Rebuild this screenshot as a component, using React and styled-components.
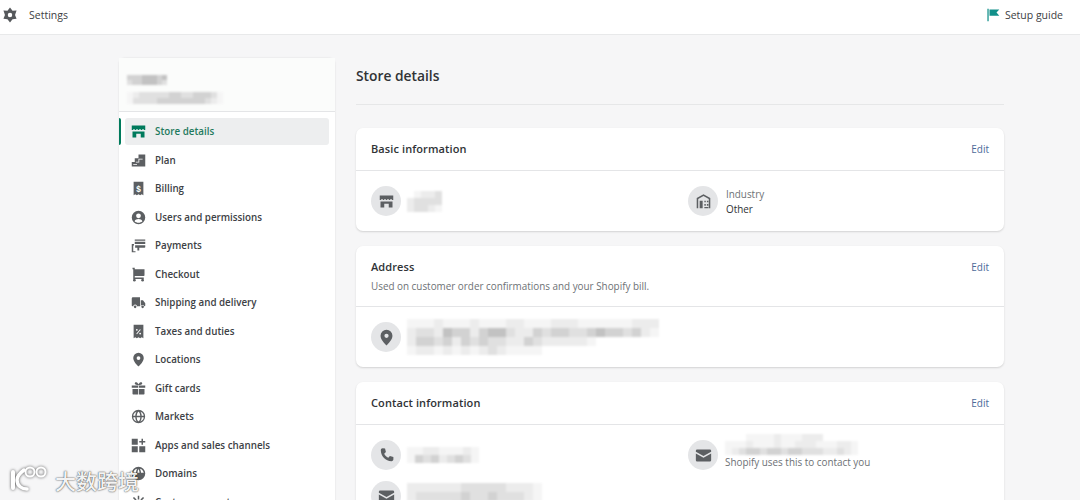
import React from "react";
import styled, { createGlobalStyle } from "styled-components";

const GlobalStyle = createGlobalStyle`
  html, body {
    margin: 0;
    width: 1080px;
    height: 500px;
    overflow: hidden;
    background: #f6f6f7;
    color: #202223;
    font-family: "Open Sans", "Noto Sans", sans-serif;
  }
  * { box-sizing: border-box; }
`;

const Page = styled.div`
  position: relative;
  width: 1080px;
  height: 500px;
  overflow: hidden;
`;

const TopBar = styled.header`
  height: 35px;
  display: flex;
  align-items: center;
  justify-content: space-between;
  padding: 0 17px 5px 2px;
  background: #fff;
  border-bottom: 1px solid #e8e9ea;
`;

const TopGroup = styled.div`
  display: flex;
  align-items: center;
  gap: ${({ $gap }) => $gap}px;
  font-size: 10.5px;
  color: #3c4043;
`;

const Layout = styled.div`
  display: flex;
  align-items: flex-start;
  gap: 21px;
  padding: 23px 76px 0 119px;
`;

const Sidebar = styled.aside`
  flex: 0 0 216px;
  background: #fff;
  border-radius: 6px 6px 0 0;
  box-shadow: 0 0 2px rgba(23, 24, 24, 0.12);
`;

const SideHead = styled.div`
  height: 54px;
  padding: 17px 0 0 8px;
  display: flex;
  flex-direction: column;
  gap: 7px;
  background: #fbfcfb;
  border-bottom: 1px solid #e4e5e7;
`;

const Nav = styled.nav`
  display: flex;
  flex-direction: column;
  gap: 1.5px;
  padding-top: 6px;
`;

const NavRow = styled.div`
  position: relative;
  flex: 0 0 27px;
  margin: 0 6px;
  padding-left: 6px;
  display: flex;
  align-items: center;
  gap: 9px;
  font-size: 9.8px;
  font-weight: 600;
  color: ${({ $active }) => ($active ? "#1f7a5e" : "#3d4145")};
  background: ${({ $active }) => ($active ? "#edeeef" : "transparent")};
  border-radius: 3px;

  &::before {
    content: "";
    display: ${({ $active }) => ($active ? "block" : "none")};
    position: absolute;
    left: -6px;
    top: 0;
    bottom: 0;
    width: 2px;
    background: #007a5c;
    border-radius: 0 2px 2px 0;
  }
`;

const Main = styled.main`
  flex: 0 0 648px;
`;

const Title = styled.h1`
  margin: 0 0 23px;
  height: 47px;
  padding-top: 8px;
  font-size: 13.8px;
  line-height: 20px;
  font-weight: 600;
  color: #303336;
  border-bottom: 1px solid #e6e7e8;
`;

const Card = styled.section`
  background: #fff;
  border-radius: 7px;
  margin-bottom: 15px;
  box-shadow: 0 1px 2px rgba(23, 24, 24, 0.16);
`;

const CardHead = styled.div`
  height: ${({ $tall }) => ($tall ? 61 : 43)}px;
  padding: ${({ $tall }) => ($tall ? "13px 15px 0" : "0 15px 1px")};
  display: flex;
  justify-content: space-between;
  align-items: ${({ $tall }) => ($tall ? "flex-start" : "center")};
  border-bottom: 1px solid #e4e5e7;
`;

const HeadText = styled.div`
  display: flex;
  flex-direction: column;
  gap: 5px;
`;

const CardTitle = styled.h2`
  margin: 0;
  font-size: 11px;
  line-height: 15px;
  font-weight: 600;
  letter-spacing: 0.1px;
  color: #303336;
`;

const SubText = styled.div`
  font-size: 9.9px;
  line-height: 14px;
  color: ${({ $dark }) => ($dark ? "#303336" : "#6d7175")};
`;

const EditLink = styled.a`
  font-size: 10px;
  line-height: 15px;
  margin-top: 1px;
  color: #4c6b9a;
`;

const CardBody = styled.div`
  display: grid;
  grid-template-columns: 317px 1fr;
  row-gap: 11px;
  padding: ${({ $pad }) => $pad}px 15px;
`;

const InfoItem = styled.div`
  display: flex;
  align-items: center;
  gap: ${({ $gap }) => $gap ?? 6}px;
  min-height: 30px;
`;

const IconDisc = styled.span`
  flex: 0 0 30px;
  width: 30px;
  height: 30px;
  border-radius: 50%;
  background: #e4e5e7;
  display: flex;
  align-items: center;
  justify-content: center;
`;

const InfoText = styled.div`
  display: flex;
  flex-direction: column;
  gap: ${({ $gap }) => $gap ?? 1}px;
  margin-top: ${({ $pull }) => ($pull ? -7 : 0)}px;
`;

const Watermark = styled.div`
  position: absolute;
  left: 10px;
  bottom: 5px;
  display: flex;
  align-items: center;
  gap: 7px;
  color: rgba(255, 255, 255, 0.96);
  font-family: "Noto Sans CJK SC", sans-serif;
  font-size: 21px;
  font-weight: 500;
  line-height: 30px;
  text-shadow: 0 0 2px rgba(0, 0, 0, 0.6), 0 0 1px rgba(0, 0, 0, 0.55);
`;

const shades = {
  0: "#ffffff",
  1: "#f5f5f5",
  2: "#ececec",
  3: "#e0e0e0",
  4: "#d2d2d2",
  5: "#c2c2c2",
};

// censored blocks in the screenshot, one char per cell
const Mosaic = ({ rows, cell = 9 }) => (
  <svg
    width={rows[0].length * cell}
    height={rows.length * cell}
    style={{ display: "block", filter: "blur(1px)" }}
  >
    {rows.map((row, y) =>
      row
        .split("")
        .map((c, x) => (
          <rect key={`${x}-${y}`} x={x * cell} y={y * cell} width={cell} height={cell} fill={shades[c]} />
        ))
    )}
  </svg>
);

const Icon = ({ size = 15, color = "#5c5f62", children }) => (
  <svg width={size} height={size} viewBox="0 0 20 20" fill={color} style={{ flex: `0 0 ${size}px`, display: "block" }}>
    {children}
  </svg>
);

const StoreGlyph = ({ color = "#5c5f62", size = 15 }) => (
  <Icon size={size} color={color}>
    <path d="M1 2h18v6H1z" />
    <path d="M2 10h16v8h-5v-5H7v5H2z" />
    <path d="M3 7h2v1H3zM7 7h2v1H7zM11 7h2v1h-2zM15 7h2v1h-2z" fill="#fff" />
  </Icon>
);

const MailGlyph = () => (
  <Icon size={17}>
    <path d="M1 4.5A1.5 1.5 0 0 1 2.5 3h15A1.5 1.5 0 0 1 19 4.5v1L10 10.5 1 5.5z" />
    <path d="M1 7.6l9 5 9-5V15.5a1.5 1.5 0 0 1-1.5 1.5h-15A1.5 1.5 0 0 1 1 15.5z" />
  </Icon>
);

const PinGlyph = ({ size = 17 }) => (
  <Icon size={size}>
    <path
      fillRule="evenodd"
      d="M10 1a7 7 0 0 0-7 7c0 4.5 5 9.5 6.3 10.7a1 1 0 0 0 1.4 0C12 17.500 17 12.500 17 8a7 7 0 0 0-7-7zm0 9.500A2.500 2.500 0 1 1 10 5.500a2.500 2.500 0 0 1 0 5z"
    />
  </Icon>
);

const navItems = [
  {
    label: "Store details",
    active: true,
    icon: <StoreGlyph color="#007a5c" />,
  },
  {
    label: "Plan",
    icon: (
      <Icon>
        <path d="M10 2h9v16H1v-6h4V7h5z" />
        <path d="M6.500 12.500H11V8.500h4.500v-1h-5.500v4H6.500zM3 14.500h5v1H3z" fill="#fff" />
      </Icon>
    ),
  },
  {
    label: "Billing",
    icon: (
      <Icon>
        <path d="M3.500 1h13v18l-2.200-1.500-2.100 1.500-2.200-1.500-2.200 1.500-2.100-1.500L3.500 19z" />
        <text x="10" y="14" fontSize="11" fontWeight="700" textAnchor="middle" fill="#fff" fontFamily="Liberation Sans">$</text>
      </Icon>
    ),
  },
  {
    label: "Users and permissions",
    icon: (
      <Icon>
        <path
          fillRule="evenodd"
          d="M10 1a9 9 0 1 0 0 18 9 9 0 0 0 0-18zm0 3.500a3.200 3.200 0 1 1 0 6.400 3.200 3.200 0 0 1 0-6.400zm-5.200 10.500c.6-2 2.800-3 5.200-3s4.600 1 5.200 3c-1.300 1.300-3.200 2-5.200 2s-3.900-.7-5.200-2z"
        />
      </Icon>
    ),
  },
  {
    label: "Payments",
    icon: (
      <Icon>
        <path d="M5 2h14v1.500H5zM5 5h14v3H5z" />
        <path d="M1 8h3v2H3v7.500h3V19H1zM5.500 9.500H19V12a1 1 0 0 1-1 1h-7v3.500H8.500V13h-3z" />
      </Icon>
    ),
  },
  {
    label: "Checkout",
    icon: (
      <Icon>
        <path d="M2 1h3v2h13v8a1 1 0 0 1-1 1H5v2h12v2H3V3H2z" />
        <circle cx="4.500" cy="17.500" r="1.800" />
        <circle cx="15.500" cy="17.500" r="1.800" />
      </Icon>
    ),
  },
  {
    label: "Shipping and delivery",
    icon: (
      <Icon>
        <path d="M1 4.500A1.500 1.500 0 0 1 2.500 3H12v12H8a2.500 2.500 0 0 0-5 0H2a1 1 0 0 1-1-1z" />
        <path d="M13 7h3l3 4v3a1 1 0 0 1-1 1h-.2a2.500 2.500 0 0 0-4.800 0z" />
        <circle cx="5.500" cy="15.800" r="1.700" />
        <circle cx="15.500" cy="15.800" r="1.700" />
      </Icon>
    ),
  },
  {
    label: "Taxes and duties",
    icon: (
      <Icon>
        <path d="M3.500 1h13v18l-2.200-1.500-2.100 1.500-2.200-1.500-2.200 1.500-2.100-1.500L3.500 19z" />
        <path d="M7 13l5-6 1 .8-5 6z" fill="#fff" />
        <circle cx="7.800" cy="7.800" r="1.200" fill="#fff" />
        <circle cx="12.200" cy="12.800" r="1.200" fill="#fff" />
      </Icon>
    ),
  },
  { label: "Locations", icon: <PinGlyph size={15} /> },
  {
    label: "Gift cards",
    icon: (
      <Icon>
        <path d="M1 6h8.500v3H1zM10.500 6H19v3h-8.500zM2 10.500h7.500V18H3a1 1 0 0 1-1-1zM10.500 10.500H18V17a1 1 0 0 1-1 1h-6.500z" />
        <path
          fillRule="evenodd"
          d="M10 5.500C8 5.500 5 5 5 3.300 5 1.900 6.200 1.400 7.200 1.700 8.600 2.100 9.600 3.500 10 4.500c.4-1 1.400-2.400 2.800-2.800 1-.3 2.200.2 2.200 1.600C15 5 12 5.500 10 5.500z"
        />
      </Icon>
    ),
  },
  {
    label: "Markets",
    icon: (
      <Icon>
        <path
          fill="none"
          stroke="#5c5f62"
          strokeWidth="1.700"
          d="M10 2a8 8 0 1 0 0 16 8 8 0 0 0 0-16zM2 10h16M10 2c-2.500 2-3.500 5-3.500 8s1 6 3.500 8c2.500-2 3.500-5 3.500-8s-1-6-3.500-8z"
        />
      </Icon>
    ),
  },
  {
    label: "Apps and sales channels",
    icon: (
      <Icon>
        <path d="M1 1h8v8H1zM1 11h8v8H1zM11 11h8v8h-8zM14 1h2v3h3v2h-3v3h-2V6h-3V4h3z" />
      </Icon>
    ),
  },
  {
    label: "Domains",
    icon: (
      <Icon>
        <path
          fillRule="evenodd"
          d="M10 1a9 9 0 1 0 0 18 9 9 0 0 0 0-18zM3 9h3.600c.1-2 .6-3.800 1.400-5.500A7 7 0 0 0 3 9zm5.600 0h2.800C11.300 7.200 10.800 5.500 10 4c-.8 1.500-1.300 3.200-1.400 5zm4.800 0H17a7 7 0 0 0-5-5.500c.8 1.700 1.300 3.500 1.400 5.500z"
        />
      </Icon>
    ),
  },
  {
    label: "Customer events",
    icon: (
      <Icon>
        <path d="M9 1h2v5H9zM2.500 4l1.500-1.400 3.400 3.500L6 7.500zM16 2.600L17.500 4 14 7.500l-1.400-1.400z" />
      </Icon>
    ),
  },
];

const App = () => (
  <Page>
    <GlobalStyle />
    <TopBar>
      <TopGroup $gap={11}>
        <Icon size={16} color="#55585b">
          <path
            fillRule="evenodd"
            d="M10 .5l3.150 4.050 5.050-.3-1.900 5.750 1.900 4.750-5.050.7L10 19.500l-3.150-4.050-5.050-.7 1.900-4.750-1.900-5.750 5.050.3zM10 7.200a2.800 2.800 0 1 0 0 5.600 2.800 2.800 0 0 0 0-5.600z"
          />
        </Icon>
        Settings
      </TopGroup>
      <TopGroup $gap={5}>
        <Icon size={14} color="#12908a">
          <path d="M2 1h1.800v18H2zM5 2h14l-4 4.500 4 4.500H5z" />
        </Icon>
        Setup guide
      </TopGroup>
    </TopBar>

    <Layout>
      <Sidebar>
        <SideHead>
          <Mosaic cell={5} rows={["44455545", "34455543"]} />
          <Mosaic cell={6} rows={["1233333443344431", "1333344444444321"]} />
        </SideHead>
        <Nav>
          {navItems.map((item) => (
            <NavRow key={item.label} $active={item.active}>
              {item.icon}
              {item.label}
            </NavRow>
          ))}
        </Nav>
      </Sidebar>

      <Main>
        <Title>Store details</Title>

        <Card>
          <CardHead>
            <CardTitle>Basic information</CardTitle>
            <EditLink>Edit</EditLink>
          </CardHead>
          <CardBody $pad={15}>
            <InfoItem>
              <IconDisc>
                <StoreGlyph />
              </IconDisc>
              <Mosaic cell={7} rows={["01223", "23333", "23321"]} />
            </InfoItem>
            <InfoItem $gap={8}>
              <IconDisc>
                <Icon size={17}>
                  <path
                    fillRule="evenodd"
                    d="M10 1.500 18 6v12h-1.800V7L10 3.500 3.800 7v11H2V6zM5.500 9H9v9H5.500zM11 9h1.700v2H11zM14 9h1.700v2H14zM11 13h1.700v2H11zM14 13h1.700v2H14zM11 16.500h4.700V18H11z"
                  />
                </Icon>
              </IconDisc>
              <InfoText>
                <SubText>Industry</SubText>
                <SubText $dark>Other</SubText>
              </InfoText>
            </InfoItem>
          </CardBody>
        </Card>

        <Card>
          <CardHead $tall>
            <HeadText>
              <CardTitle>Address</CardTitle>
              <SubText>Used on customer order confirmations and your Shopify bill.</SubText>
            </HeadText>
            <EditLink>Edit</EditLink>
          </CardHead>
          <CardBody $pad={12}>
            <InfoItem>
              <IconDisc>
                <PinGlyph />
              </IconDisc>
              <Mosaic
                rows={[
                  "1112111211122111222111111222",
                  "2332544245532243443345443421",
                  "2443424343322432222210000000",
                  "1221212123211110000000000000",
                ]}
              />
            </InfoItem>
          </CardBody>
        </Card>

        <Card>
          <CardHead>
            <CardTitle>Contact information</CardTitle>
            <EditLink>Edit</EditLink>
          </CardHead>
          <CardBody $pad={15}>
            <InfoItem>
              <IconDisc>
                <Icon size={17}>
                  <path d="M5.500 1.500 8.300 1.900 9.300 6 7.300 7.800c.9 2 2.600 3.800 4.800 4.900l1.900-2 4.100 1v2.800c0 1.300-1 2.300-2.300 2.200C8.800 16.300 3.700 11.200 3.300 4 3.200 2.600 4.200 1.500 5.500 1.500z" />
                </Icon>
              </IconDisc>
              <Mosaic cell={8} rows={["112211121", "143423431"]} />
            </InfoItem>
            <InfoItem $gap={7}>
              <IconDisc>
                <MailGlyph />
              </IconDisc>
              <InfoText $gap={0} $pull>
                <Mosaic
                  cell={7}
                  rows={["0001111211122200000", "1112111211222111221", "1234434434433322321"]}
                />
                <SubText>Shopify uses this to contact you</SubText>
              </InfoText>
            </InfoItem>
            <InfoItem>
              <IconDisc>
                <MailGlyph />
              </IconDisc>
              <Mosaic cell={9} rows={["222222333332221", "233333433433321", "122223333222211"]} />
            </InfoItem>
          </CardBody>
        </Card>
      </Main>
    </Layout>

    <Watermark>
      <svg width="38" height="30" viewBox="0 0 38 30" fill="none" stroke="#fff" style={{ filter: "drop-shadow(0 0 1.5px rgba(0,0,0,.65))" }}>
        <path d="M3 7v16" strokeWidth="4" strokeLinecap="round" />
        <path d="M14 5c-4 3-7 6-7 10 0 6 5 9 10 9" strokeWidth="3.500" strokeLinecap="round" />
        <circle cx="20" cy="7" r="4.500" strokeWidth="2" />
        <circle cx="31" cy="7" r="4.500" strokeWidth="2" />
      </svg>
      大数跨境
    </Watermark>
  </Page>
);

export default App;
